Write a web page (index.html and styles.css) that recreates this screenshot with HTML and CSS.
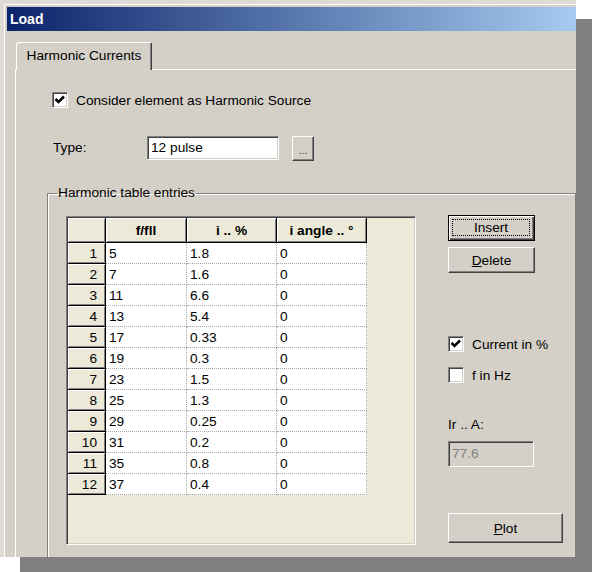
FILE: index.html
```html
<!DOCTYPE html>
<html lang="en">
<head>
<meta charset="utf-8">
<title>Load</title>
<link rel="stylesheet" href="styles.css">
</head>
<body>
<div class="screen">
  <div class="window">
    <div class="frame">
      <div class="titlebar"><span class="title">Load</span></div>

      <div class="tabs">
        <div class="tab">Harmonic Currents</div>
      </div>

      <div class="page">
        <div class="check-row">
          <span class="check"><svg viewBox="0 0 16 16" width="16" height="16"><polyline points="3.5,7 6.5,10 12,4.5" fill="none" stroke="#000" stroke-width="2.6"/></svg></span>
          <span>Consider element as Harmonic Source</span>
        </div>

        <div class="type-row">
          <span class="type-label">Type:</span>
          <span class="field">12 pulse</span>
          <span class="btn dots">...</span>
        </div>

        <fieldset class="group">
          <legend>Harmonic table entries</legend>
          <div class="group-body">
            <div class="grid">
              <div class="table">
                <div class="hc"></div><div class="hc">f/fll</div><div class="hc">i .. %</div><div class="hc">i angle .. °</div>
                <div class="rh">1</div><div class="dc">5</div><div class="dc">1.8</div><div class="dc">0</div>
                <div class="rh">2</div><div class="dc">7</div><div class="dc">1.6</div><div class="dc">0</div>
                <div class="rh">3</div><div class="dc">11</div><div class="dc">6.6</div><div class="dc">0</div>
                <div class="rh">4</div><div class="dc">13</div><div class="dc">5.4</div><div class="dc">0</div>
                <div class="rh">5</div><div class="dc">17</div><div class="dc">0.33</div><div class="dc">0</div>
                <div class="rh">6</div><div class="dc">19</div><div class="dc">0.3</div><div class="dc">0</div>
                <div class="rh">7</div><div class="dc">23</div><div class="dc">1.5</div><div class="dc">0</div>
                <div class="rh">8</div><div class="dc">25</div><div class="dc">1.3</div><div class="dc">0</div>
                <div class="rh">9</div><div class="dc">29</div><div class="dc">0.25</div><div class="dc">0</div>
                <div class="rh">10</div><div class="dc">31</div><div class="dc">0.2</div><div class="dc">0</div>
                <div class="rh">11</div><div class="dc">35</div><div class="dc">0.8</div><div class="dc">0</div>
                <div class="rh">12</div><div class="dc">37</div><div class="dc">0.4</div><div class="dc">0</div>
              </div>
            </div>

            <div class="side">
              <span class="btn default insert"><span class="focus">Insert</span></span>
              <span class="btn delete"><span><u>D</u>elete</span></span>

              <div class="check-row side-check current">
                <span class="check"><svg viewBox="0 0 16 16" width="16" height="16"><polyline points="3.5,7 6.5,10 12,4.5" fill="none" stroke="#000" stroke-width="2.6"/></svg></span>
                <span>Current in %</span>
              </div>
              <div class="check-row side-check hz">
                <span class="check"></span>
                <span>f in Hz</span>
              </div>

              <span class="ir-label">Ir .. A:</span>
              <span class="field disabled">77.6</span>

              <span class="btn plot"><span><u>P</u>lot</span></span>
            </div>
          </div>
        </fieldset>
      </div>
    </div>
  </div>
</div>
</body>
</html>
```

FILE: styles.css
```css
body {
  margin: 0;
  background: #fff;
  font-family: "Liberation Sans", Arial, sans-serif;
  font-size: 13.7px;
  color: #000;
}

.screen {
  width: 592px;
  height: 572px;
  overflow: hidden;
}

/* dialog window, cut off at right and bottom, with a flat drop shadow */
.window {
  width: 576px;
  height: 557px;
  box-sizing: border-box;
  background: #d4d0c8;
  border-top: 4px solid #dedbd4;
  border-left: 4px solid #dedbd4;
  overflow: hidden;
  box-shadow: 18px 17px 0 -2px #808080;
}

.frame {
  height: 100%;
  box-sizing: border-box;
  border-top: 1px solid #fff;
  border-left: 1px solid #fff;
  padding: 2px 0 0 2px;
}

.titlebar {
  height: 24px;
  background: linear-gradient(to right, #0a246a, #a6caf0);
  display: flex;
  align-items: center;
  padding-left: 3px;
}

.title {
  color: #fff;
  font-weight: bold;
  font-size: 14px;
}

/* tab strip */
.tabs {
  display: flex;
  margin-top: 11px;
  padding-left: 9px;
}

.tab {
  position: relative;
  z-index: 1;
  width: 136px;
  height: 28px;
  box-sizing: border-box;
  margin-bottom: -1px;
  background: #d4d0c8;
  border-top: 1px solid #fff;
  border-left: 1px solid #fff;
  border-right: 1px solid #404040;
  box-shadow: inset -1px 0 0 #808080;
  border-top-left-radius: 3px;
  border-top-right-radius: 2px;
  text-align: center;
  line-height: 25px;
}

.page {
  margin-left: 8px;
  border-top: 1px solid #fff;
  border-left: 1px solid #fff;
  padding: 22px 0 0 36px;
}

/* checkboxes */
.check-row {
  display: flex;
  align-items: center;
  gap: 8px;
  height: 16px;
}

.check {
  width: 16px;
  height: 16px;
  box-sizing: border-box;
  flex: none;
  background: #fff;
  border: 1px solid;
  border-color: #808080 #fff #fff #808080;
  box-shadow: inset 1px 1px 0 #404040, inset -1px -1px 0 #d4d0c8;
  display: flex;
  align-items: center;
  justify-content: center;
}

.check svg {
  display: block;
  flex: none;
}

/* type selector */
.type-row {
  display: flex;
  align-items: flex-start;
  margin-top: 28px;
  height: 25px;
}

.type-label {
  width: 94px;
  margin-left: 1px;
  line-height: 24px;
}

.field {
  box-sizing: border-box;
  width: 132px;
  height: 24px;
  background: #fff;
  border: 1px solid;
  border-color: #808080 #fff #fff #808080;
  box-shadow: inset 1px 1px 0 #404040, inset -1px -1px 0 #d4d0c8;
  padding-left: 3px;
  line-height: 22px;
}

.btn {
  box-sizing: border-box;
  display: flex;
  align-items: center;
  justify-content: center;
  background: #d4d0c8;
  border: 1px solid;
  border-color: #fff #404040 #404040 #fff;
  box-shadow: inset -1px -1px 0 #808080;
}

.dots {
  width: 22px;
  height: 25px;
  margin-left: 13px;
  color: #404040;
  font-size: 11px;
  padding-top: 2px;
}

/* group box */
.group {
  margin: 24px 0 0 -5px;
  padding: 15px 0 0 9px;
  height: 420px;
  border: 1px solid #808080;
  box-shadow: inset 1px 1px 0 #fff, 1px 1px 0 #fff;
}

.group legend {
  padding: 0 1px;
  line-height: 16px;
}

.group-body {
  display: flex;
  align-items: flex-start;
  gap: 32px;
}

/* table grid */
.grid {
  margin-left: 9px;
  width: 350px;
  height: 329px;
  box-sizing: border-box;
  background: #ece9d8;
  border: 1px solid;
  border-color: #808080 #fff #fff #808080;
  box-shadow: inset 1px 1px 0 #404040, inset -1px -1px 0 #d4d0c8;
  padding: 1px;
}

.table {
  display: grid;
  grid-template-columns: 38px 81px 90px 90px;
  grid-template-rows: 25px;
  grid-auto-rows: 21px;
  width: 299px;
}

.hc,
.rh {
  box-sizing: border-box;
  background: #ece9d8;
  border-right: 1px solid #000;
  border-bottom: 1px solid #000;
  box-shadow: inset 1px 1px 0 #fff, inset -1px -1px 0 #808080;
  display: flex;
  align-items: center;
}

.hc {
  justify-content: center;
  font-weight: bold;
}

.rh {
  justify-content: flex-end;
  padding-right: 8px;
}

.dc {
  box-sizing: border-box;
  background: #fff;
  border-right: 1px dotted #a8a8a8;
  border-bottom: 1px dotted #a8a8a8;
  padding-left: 3px;
  display: flex;
  align-items: center;
}

/* right-hand controls */
.side {
  display: flex;
  flex-direction: column;
  align-items: flex-start;
  margin-top: -1px;
}

.insert,
.delete {
  width: 87px;
  height: 26px;
}

.default {
  border-color: #000;
  box-shadow: inset 1px 1px 0 #fff, inset -1px -1px 0 #404040, inset -2px -2px 0 #808080;
  padding: 3px 4px 4px 3px;
}

.focus {
  flex: 1;
  align-self: stretch;
  border: 1px dotted #000;
  display: flex;
  align-items: center;
  justify-content: center;
}

.delete {
  margin-top: 6px;
}

.side-check.current {
  margin-top: 63px;
}

.side-check.hz {
  margin-top: 15px;
}

.ir-label {
  margin-top: 34px;
  line-height: 16px;
}

.field.disabled {
  margin-top: 8px;
  width: 86px;
  height: 26px;
  background: #d4d0c8;
  color: #808080;
  line-height: 24px;
}

.plot {
  margin-top: 46px;
  width: 115px;
  height: 30px;
}
```
